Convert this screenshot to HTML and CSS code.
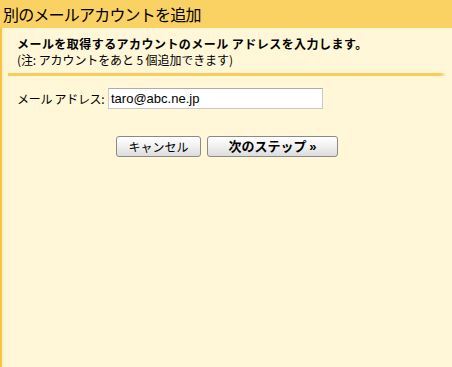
FILE: index.html
```html
<!DOCTYPE html>
<html lang="ja">
<head>
<meta charset="utf-8">
<link rel="stylesheet" href="styles.css">
</head>
<body>
<div class="header">別のメールアカウントを追加</div>
<div class="panel">
  <div class="intro">
    <div class="lead">メールを取得するアカウントのメール アドレスを入力します。</div>
    <div class="note">(注: アカウントをあと 5 個追加できます)</div>
  </div>
  <div class="rule"></div>
  <div class="field">
    <label class="label" for="addr">メール アドレス:</label>
    <input id="addr" class="input" type="text" value="taro@abc.ne.jp">
  </div>
  <div class="actions">
    <button class="btn btn-cancel">キャンセル</button>
    <button class="btn btn-next">次のステップ <span class="raquo">»</span></button>
  </div>
</div>
</body>
</html>
```
FILE: styles.css
```css
html, body {
  margin: 0;
  padding: 0;
}
body {
  width: 452px;
  height: 367px;
  overflow: hidden;
  background: #fff7d7;
  font-family: "Noto Sans CJK JP", "Liberation Sans", sans-serif;
  color: #000;
}
.header {
  height: 28px;
  line-height: 28px;
  background: #fad163;
  font-size: 16px;
  padding-left: 3px;
  letter-spacing: -0.8px;
}
.panel {
  height: 339px;
  border-left: 2px solid #f4c54a;
  box-sizing: border-box;
  background: linear-gradient(to right, #fdefbd 0, #fff7d7 4px);
}
.intro {
  padding: 8px 0 0 15px;
}
.lead {
  font-size: 12px;
  font-weight: bold;
  line-height: 16px;
  letter-spacing: 0.45px;
}
.note {
  font-size: 12px;
  line-height: 16px;
  letter-spacing: -0.1px;
}
.rule {
  margin: 5px 0 0 6px;
  width: 438px;
  height: 3px;
  background: linear-gradient(to right, #f8cd57 0, #f8cd57 433px, #fff7d7 438px);
}
.field {
  display: flex;
  align-items: center;
  margin-top: 12px;
  padding-left: 15px;
}
.label {
  font-size: 12px;
  width: 91px;
  letter-spacing: -0.3px;
}
.input {
  box-sizing: border-box;
  width: 215px;
  height: 21px;
  border: 1px solid #c8c8c8;
  border-top-color: #abadb3;
  background: #fff;
  font-family: "Liberation Sans", Arial, sans-serif;
  font-size: 13px;
  padding: 0 2px;
  margin: 0;
  outline: none;
}
.actions {
  display: flex;
  gap: 6px;
  margin-top: 27px;
  padding-left: 114px;
}
.btn {
  box-sizing: border-box;
  height: 21px;
  border: 1px solid #8a8a8a;
  border-radius: 3px;
  background: linear-gradient(to bottom, #ffffff 0%, #f0f0f0 50%, #dcdcdc 100%);
  font-family: "Noto Sans CJK JP", "Liberation Sans", sans-serif;
  font-size: 12px;
  line-height: 18px;
  padding: 0;
  margin: 0;
  color: #000;
}
.btn-cancel {
  width: 85px;
}
.btn-next {
  width: 131px;
  font-weight: bold;
  font-size: 13px;
}
.raquo {
  font-family: "Liberation Sans", sans-serif;
  font-weight: bold;
}
```
